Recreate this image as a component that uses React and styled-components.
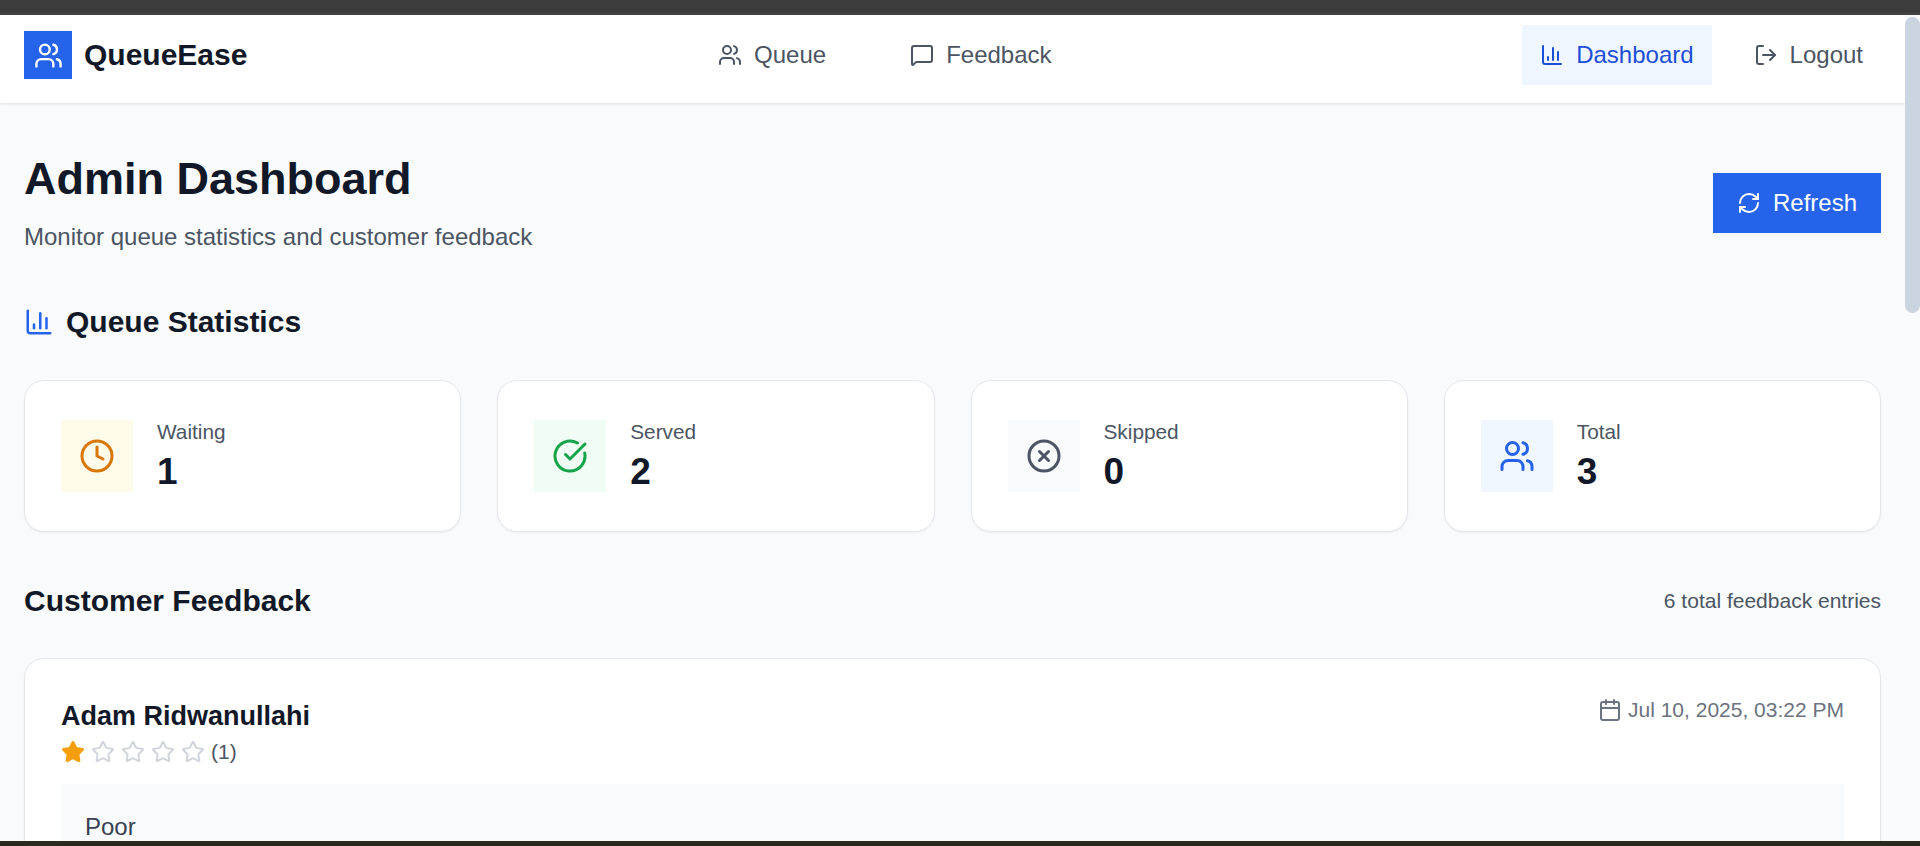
import React from "react";
import styled, { createGlobalStyle } from "styled-components";
import { Users, MessageSquare, ChartColumn, LogOut, RefreshCw, Clock, CircleCheckBig, CircleX, Calendar, Star } from "lucide-react";

const Global = createGlobalStyle`
  html, body { margin: 0; padding: 0; height: 100%; overflow: hidden; }
  body { font-family: "Liberation Sans", Arial, sans-serif; background: #f9fafb; color: #111827; }
  * { box-sizing: border-box; }
`;

const Frame = styled.div`display: flex; flex-direction: column; height: 846px; overflow: hidden;`;
const TopStrip = styled.div`height: 15px; flex: none; background: #3c3c3c; border-bottom: 2px solid #444;`;
const BottomStrip = styled.div`height: 5px; flex: none; background: #2a2a1f;`;
const Middle = styled.div`flex: 1; min-height: 0; display: flex; background: #f9fafb;`;
const Viewport = styled.div`flex: 1; min-width: 0; overflow: hidden;`;
const Rail = styled.div`width: 15px; flex: none; background: #f8fafc; display: flex; flex-direction: column; padding-top: 2px;`;
const Thumb = styled.div`height: 296px; background: #cbd5e1; border-radius: 8px;`;

const Header = styled.header`
  height: 88px; background: #fff; padding: 10px 24px 18px;
  display: flex; align-items: center; justify-content: space-between;
  box-shadow: 0 1px 3px rgba(0,0,0,.1);
  position: relative;
`;
const Brand = styled.div`display: flex; align-items: center; gap: 12px;`;
const LogoBox = styled.div`width: 48px; height: 48px; background: #2563eb; color: #fff; display: flex; align-items: center; justify-content: center;`;
const BrandName = styled.span`font-size: 30px; font-weight: 700; color: #111827;`;
const NavGroup = styled.nav`display: flex; align-items: center; gap: ${p => p.$gap}px;`;
const NavItem = styled.a`
  height: 60px; padding: 0 18px; display: flex; align-items: center; gap: 12px;
  font-size: 24px; color: ${p => p.$active ? "#1d4ed8" : "#4b5563"};
  background: ${p => p.$active ? "#eff6ff" : "transparent"};
`;

const Main = styled.main`padding: 49px 24px 0;`;
const PageHead = styled.div`display: flex; align-items: center; justify-content: space-between;`;
const Title = styled.h1`margin: 0 0 15px; font-size: 45px; line-height: 54px; font-weight: 700; color: #111827;`;
const Subtitle = styled.p`margin: 0; font-size: 24px; line-height: 32px; color: #4b5563;`;
const RefreshButton = styled.button`
  width: 168px; height: 60px; border: 0; background: #2563eb; color: #fff; padding: 0 24px;
  display: flex; align-items: center; justify-content: space-between;
  font: 24px "Liberation Sans", Arial, sans-serif;
`;
const SectionTitle = styled.h2`
  margin: 0; font-size: 30px; line-height: 36px; font-weight: 700; color: #111827;
  display: flex; align-items: center; gap: 12px;
`;
const StatsHead = styled.div`margin-top: 51px; color: #2563eb;`;
const StatsGrid = styled.div`margin-top: 40px; display: grid; grid-template-columns: repeat(4, 1fr); gap: 36px;`;
const StatCard = styled.div`
  background: #fff; border: 1px solid #e5e7eb; border-radius: 20px; padding: 36px; height: 152px;
  display: flex; align-items: center; gap: 24px; box-shadow: 0 1px 2px rgba(0,0,0,.05);
`;
const StatIcon = styled.div`
  width: 72px; height: 72px; flex: none; display: flex; align-items: center; justify-content: center;
  background: ${p => p.$bg}; color: ${p => p.$fg};
`;
const StatLabel = styled.div`font-size: 20.8px; line-height: 30px; margin-bottom: 2px; color: #4b5563;`;
const StatValue = styled.div`font-size: 37px; line-height: 46px; font-weight: 700; color: #111827;`;
const FeedbackHead = styled.div`margin-top: 51px; display: flex; align-items: center; justify-content: space-between;`;
const Count = styled.span`font-size: 21px; color: #4b5563;`;
const FeedbackCard = styled.article`
  margin-top: 39px; background: #fff; border: 1px solid #e5e7eb; border-radius: 20px; padding: 40px 36px 36px;
  box-shadow: 0 1px 2px rgba(0,0,0,.05);
`;
const CardTop = styled.div`display: flex; justify-content: space-between; align-items: flex-start;`;
const Name = styled.h3`margin: 0; font-size: 27px; line-height: 34px; font-weight: 700; color: #111827;`;
const Rating = styled.div`margin-top: 7px; display: flex; align-items: center; gap: 6px; color: #d1d5db;`;
const RatingNum = styled.span`font-size: 21px; color: #4b5563;`;
const DateLine = styled.div`display: flex; align-items: center; gap: 6px; font-size: 21px; color: #6b7280; margin-top: -1px;`;
const Comment = styled.div`margin-top: 20px; background: #f9fafb; padding: 27px 24px 26px; font-size: 24px; line-height: 32px; color: #374151;`;

const stats = [
  { label: "Waiting", value: 1, Icon: Clock, bg: "#fffbeb", fg: "#d97706" },
  { label: "Served", value: 2, Icon: CircleCheckBig, bg: "#f0fdf4", fg: "#16a34a" },
  { label: "Skipped", value: 0, Icon: CircleX, bg: "#f9fafb", fg: "#4b5563" },
  { label: "Total", value: 3, Icon: Users, bg: "#eff6ff", fg: "#2563eb" },
];

export default function App() {
  return (
    <Frame>
      <Global />
      <TopStrip />
      <Middle>
        <Viewport>
          <Header>
            <Brand>
              <LogoBox><Users size={29} /></LogoBox>
              <BrandName>QueueEase</BrandName>
            </Brand>
            <NavGroup $gap={48}>
              <NavItem><Users size={24} />Queue</NavItem>
              <NavItem><MessageSquare size={24} />Feedback</NavItem>
            </NavGroup>
            <NavGroup $gap={24}>
              <NavItem $active><ChartColumn size={24} />Dashboard</NavItem>
              <NavItem><LogOut size={24} />Logout</NavItem>
            </NavGroup>
          </Header>
          <Main>
            <PageHead>
              <div>
                <Title>Admin Dashboard</Title>
                <Subtitle>Monitor queue statistics and customer feedback</Subtitle>
              </div>
              <RefreshButton><RefreshCw size={24} />Refresh</RefreshButton>
            </PageHead>
            <StatsHead>
              <SectionTitle><ChartColumn size={30} color="#2563eb" />Queue Statistics</SectionTitle>
            </StatsHead>
            <StatsGrid>
              {stats.map(({ label, value, Icon, bg, fg }) => (
                <StatCard key={label}>
                  <StatIcon $bg={bg} $fg={fg}><Icon size={36} /></StatIcon>
                  <div>
                    <StatLabel>{label}</StatLabel>
                    <StatValue>{value}</StatValue>
                  </div>
                </StatCard>
              ))}
            </StatsGrid>
            <FeedbackHead>
              <SectionTitle>Customer Feedback</SectionTitle>
              <Count>6 total feedback entries</Count>
            </FeedbackHead>
            <FeedbackCard>
              <CardTop>
                <div>
                  <Name>Adam Ridwanullahi</Name>
                  <Rating>
                    <Star size={24} fill="#f59e0b" color="#f59e0b" />
                    <Star size={24} />
                    <Star size={24} />
                    <Star size={24} />
                    <Star size={24} />
                    <RatingNum>(1)</RatingNum>
                  </Rating>
                </div>
                <DateLine><Calendar size={24} />Jul 10, 2025, 03:22 PM</DateLine>
              </CardTop>
              <Comment>Poor</Comment>
            </FeedbackCard>
          </Main>
        </Viewport>
        <Rail><Thumb /></Rail>
      </Middle>
      <BottomStrip />
    </Frame>
  );
}
